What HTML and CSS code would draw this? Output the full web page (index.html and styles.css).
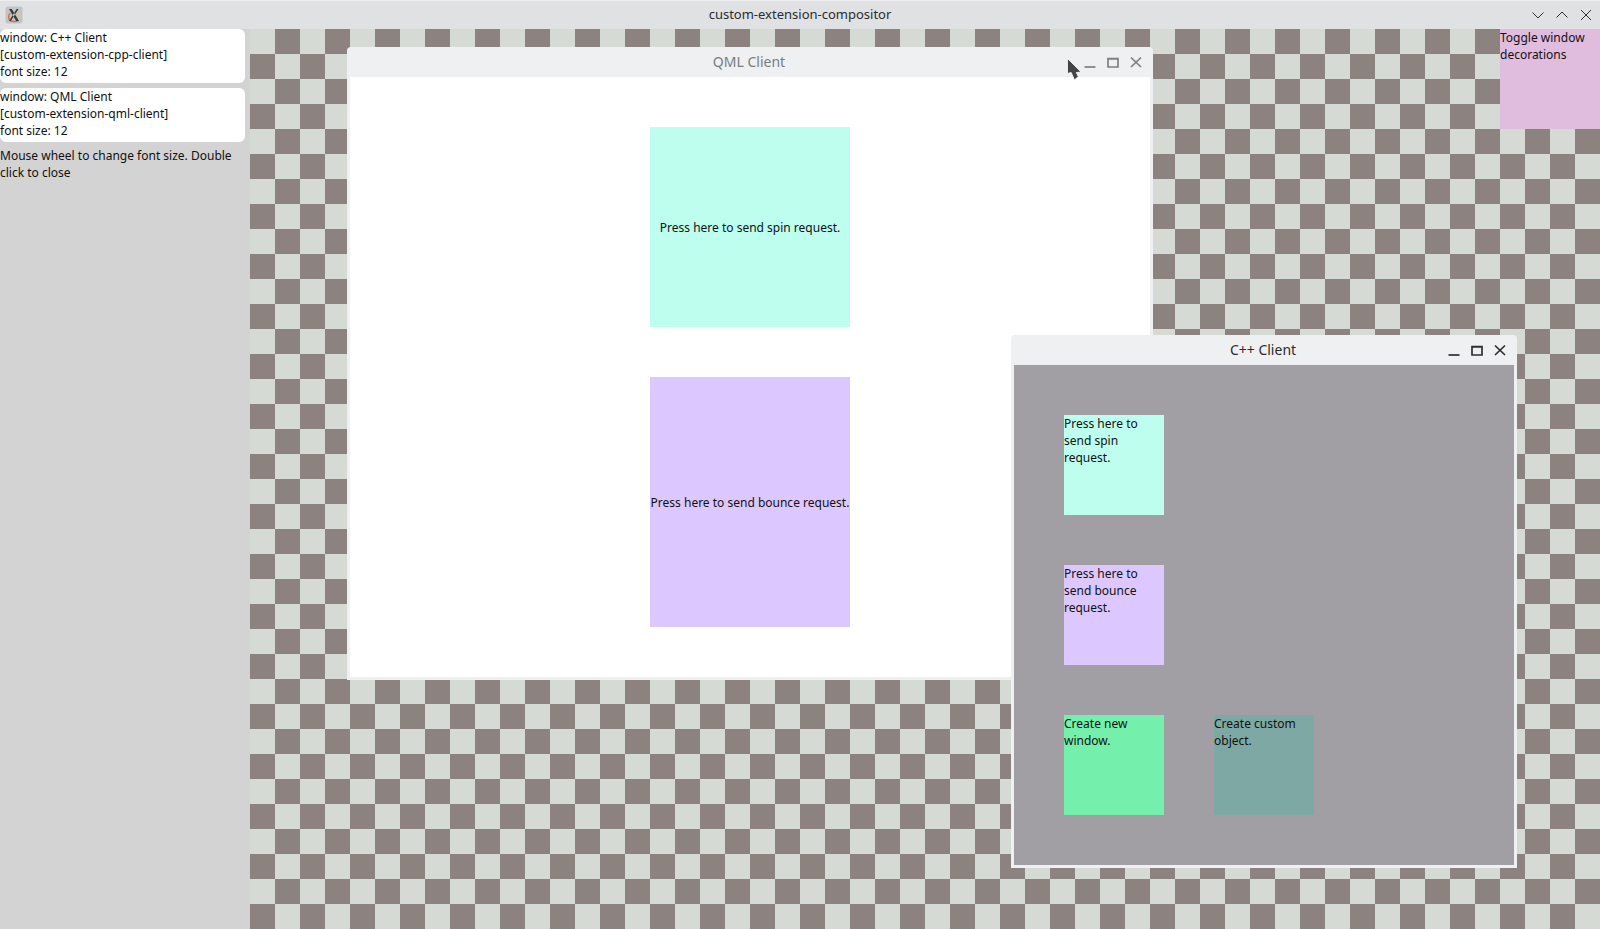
FILE: index.html
```html
<!DOCTYPE html>
<html lang="en">
<head>
<meta charset="utf-8">
<title>custom-extension-compositor</title>
<link rel="stylesheet" href="styles.css">
</head>
<body>
<header class="appbar">
  <svg class="appicon" viewBox="0 0 18 18" width="18" height="18">
    <rect x="0.5" y="0.5" width="17" height="17" rx="2" fill="#c2c5c7"/>
    <path d="M13.500 14.500c-3 1.400-7.500 1.200-9-.6C3.300 12.300 3.600 9.500 5 7" fill="none" stroke="#e2702a" stroke-width="1.500"/>
    <path d="M13 7c1.500 2 1.500 5 .5 7" fill="none" stroke="#e9c77a" stroke-width="1.300"/>
    <path d="M4 3h2.800l7.200 12h-2.800zM13.500 3h-1.800L4 15h1.800z" fill="#3a3a3e"/>
  </svg>
  <span class="apptitle">custom-extension-compositor</span>
  <div class="appctrl">
    <svg viewBox="0 0 14 14" width="14" height="14"><path d="M1.500 4.500 7 10l5.500-5.500" /></svg>
    <svg viewBox="0 0 14 14" width="14" height="14"><path d="M1.500 9.500 7 4l5.500 5.500" /></svg>
    <svg viewBox="0 0 14 14" width="14" height="14"><path d="M2 2l10 10M12 2 2 12" /></svg>
  </div>
</header>
<div class="main">
  <aside class="sidebar">
    <div class="card">window: C++ Client<br>[custom-extension-cpp-client]<br>font size: 12</div>
    <div class="card">window: QML Client<br>[custom-extension-qml-client]<br>font size: 12</div>
    <p class="hint">Mouse wheel to change font size. Double click to close</p>
  </aside>
  <section class="canvas">
    <button class="toggle">Toggle window decorations</button>

    <article class="win win-qml">
      <div class="titlebar">
        <span class="wintitle">QML Client</span>
        <div class="winctrl">
          <svg viewBox="0 0 12 12" width="12" height="12"><path d="M0.500 11h11"/></svg>
          <svg viewBox="0 0 12 12" width="12" height="12"><path d="M1 3h10M1 2.500h10v8.500H1z" /></svg>
          <svg viewBox="0 0 12 12" width="12" height="12"><path d="M1 1.500l10 9.500M11 1.500 1 11"/></svg>
        </div>
      </div>
      <div class="qml-body">
        <div class="qbtn qspin">Press here to send spin request.</div>
        <div class="qbtn qbounce">Press here to send bounce request.</div>
      </div>
    </article>

    <article class="win win-cpp">
      <div class="titlebar">
        <span class="wintitle">C++ Client</span>
        <div class="winctrl">
          <svg viewBox="0 0 12 12" width="12" height="12"><path d="M0.500 11h11"/></svg>
          <svg viewBox="0 0 12 12" width="12" height="12"><path d="M1 3h10M1 2.500h10v8.500H1z" /></svg>
          <svg viewBox="0 0 12 12" width="12" height="12"><path d="M1 1.500l10 9.500M11 1.500 1 11"/></svg>
        </div>
      </div>
      <div class="cpp-body">
        <div class="cbtn cspin">Press here to send spin request.</div>
        <div class="cbtn cbounce">Press here to send bounce request.</div>
        <div class="cbtn cnew">Create new window.</div>
        <div class="cbtn ccustom">Create custom object.</div>
      </div>
    </article>

    <svg class="cursor" viewBox="0 0 15 23" width="15" height="23">
      <path d="M0.500 0.500v15l3.700-1 3.300 7.500 3.800-3.500-2-4L14 14z" fill="#454545" stroke="#f4f4f4" stroke-width="0.900"/>
    </svg>
  </section>
</div>
</body>
</html>
```
FILE: styles.css
```css
* { box-sizing: border-box; }
html, body { margin: 0; height: 100%; }
body {
  width: 1600px;
  height: 929px;
  overflow: hidden;
  display: flex;
  flex-direction: column;
  font-family: "Noto Sans", sans-serif;
  font-size: 12px;
  line-height: 17px;
  color: #111;
}
.appbar {
  height: 29px;
  flex: none;
  background: #dfe1e3;
  box-shadow: inset 0 1px 0 #eceef0;
  display: flex;
  align-items: center;
  position: relative;
}
.appicon { margin-left: 5px; }
.apptitle {
  position: absolute;
  left: 0;
  right: 0;
  text-align: center;
  font-size: 13px;
  color: #2a2c2f;
}
.appctrl {
  margin-left: auto;
  margin-right: 7px;
  display: flex;
  gap: 10px;
}
.appctrl path { fill: none; stroke: #2f3133; stroke-width: 1; }
.main { flex: 1; display: flex; min-height: 0; }
.sidebar {
  width: 250px;
  flex: none;
  background: #d3d3d3;
  display: flex;
  flex-direction: column;
  gap: 5px;
}
.card {
  width: 245px;
  height: 54px;
  background: #fff;
  border-radius: 6px;
}
.hint { margin: 0; width: 245px; }
.canvas {
  flex: 1;
  position: relative;
  background-color: #d5dad4;
  background-image: conic-gradient(#8c8280 25%, #d5dad4 0 50%, #8c8280 0 75%, #d5dad4 0);
  background-size: 50px 50px;
}
.toggle {
  position: absolute;
  top: 0;
  right: 0;
  width: 100px;
  height: 100px;
  border: 0;
  background: #e0bcdf;
  font: inherit;
  color: inherit;
  text-align: left;
  display: block;
  padding: 0 0 66px;
}
.win {
  position: absolute;
  background: #eff0f1;
  border-radius: 4px 4px 0 0;
  padding: 0 3px 3px;
  display: flex;
  flex-direction: column;
}
.win-qml { left: 97px; top: 18px; width: 806px; height: 633px; }
.win-cpp { left: 761px; top: 306px; width: 506px; height: 533px; }
.titlebar {
  height: 30px;
  flex: none;
  display: flex;
  align-items: center;
  position: relative;
}
.wintitle {
  position: absolute;
  left: 0;
  right: 2px;
  top: 5px;
  text-align: center;
  font-size: 14px;
  line-height: 20px;
}
.winctrl {
  margin-left: auto;
  margin-right: 8px;
  display: flex;
  gap: 11px;
  position: relative;
}
.winctrl path { fill: none; stroke-width: 1.700; }
.win-qml .wintitle { color: #7a7c7e; }
.win-qml .winctrl path { stroke: #7d7f81; }
.win-cpp .wintitle { color: #2a2c2f; }
.win-cpp .winctrl path { stroke: #2c2e30; }
.qml-body {
  flex: 1;
  background: #fff;
  display: flex;
  flex-direction: column;
  align-items: center;
  padding-top: 50px;
  gap: 50px;
}
.qbtn {
  width: 200px;
  display: flex;
  align-items: center;
  justify-content: center;
  white-space: nowrap;
}
.qspin { height: 200px; background: #bdfeee; }
.qbounce { height: 250px; background: #dcc8ff; }
.cpp-body {
  flex: 1;
  background: #a19fa4;
  padding: 50px;
  display: grid;
  grid-template-columns: 100px 100px;
  grid-auto-rows: 100px;
  gap: 50px;
  align-content: start;
}
.cbtn { padding-right: 10px; }
.cbounce { grid-row: 2; grid-column: 1; }
.cnew { grid-row: 3; grid-column: 1; }
.ccustom { grid-row: 3; grid-column: 2; }
.cspin { background: #bdfeee; }
.cbounce { background: #dcc8ff; }
.cnew { background: #74f0ac; }
.ccustom { background: #7ea8a4; }
.cursor {
  position: absolute;
  left: 817px;
  top: 29px;
}
```
